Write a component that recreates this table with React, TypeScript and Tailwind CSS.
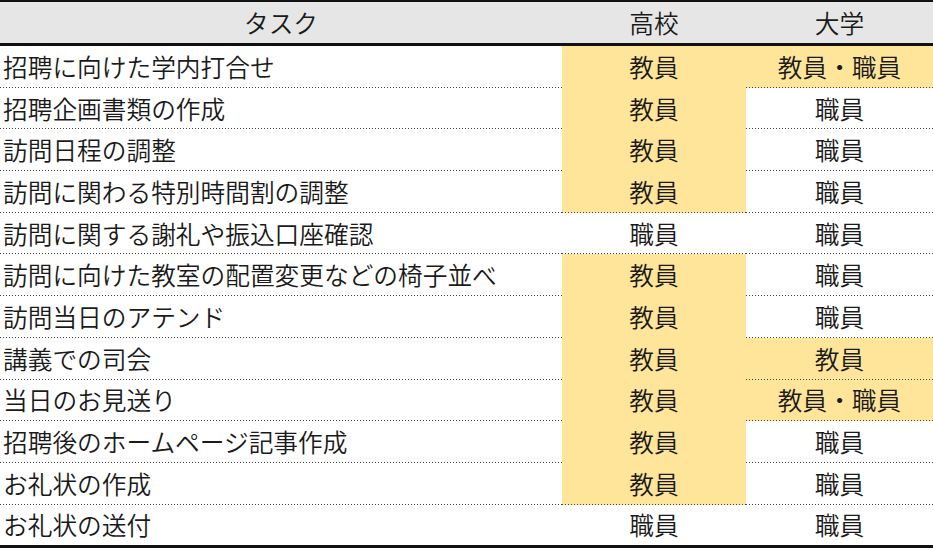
import React from 'react';

type Row = { task: string; hs: string; univ: string; hsY: boolean; univY: boolean };

const rows: Row[] = [
  { task: '招聘に向けた学内打合せ', hs: '教員', univ: '教員・職員', hsY: true, univY: true },
  { task: '招聘企画書類の作成', hs: '教員', univ: '職員', hsY: true, univY: false },
  { task: '訪問日程の調整', hs: '教員', univ: '職員', hsY: true, univY: false },
  { task: '訪問に関わる特別時間割の調整', hs: '教員', univ: '職員', hsY: true, univY: false },
  { task: '訪問に関する謝礼や振込口座確認', hs: '職員', univ: '職員', hsY: false, univY: false },
  { task: '訪問に向けた教室の配置変更などの椅子並べ', hs: '教員', univ: '職員', hsY: true, univY: false },
  { task: '訪問当日のアテンド', hs: '教員', univ: '職員', hsY: true, univY: false },
  { task: '講義での司会', hs: '教員', univ: '教員', hsY: true, univY: true },
  { task: '当日のお見送り', hs: '教員', univ: '教員・職員', hsY: true, univY: true },
  { task: '招聘後のホームページ記事作成', hs: '教員', univ: '職員', hsY: true, univY: false },
  { task: 'お礼状の作成', hs: '教員', univ: '職員', hsY: true, univY: false },
  { task: 'お礼状の送付', hs: '職員', univ: '職員', hsY: false, univY: false },
];

// 1px dotted rule with 3px period, like the sheet export
function Dots({ hidden }: { hidden?: boolean }) {
  if (hidden) return <div className="h-px" />;
  return <div className="h-px bg-[repeating-linear-gradient(90deg,#444_0_1px,transparent_1px_3px)]" />;
}

export default function App() {
  return (
    <div
      className="w-[933px] h-[556px] bg-white text-[#1a1a1a] text-[24.7px] leading-none font-[350]"
      style={{ fontFamily: '"Noto Sans CJK JP", "Noto Sans", sans-serif' }}
    >
      <div className="w-[933px]">
        {/* header */}
        <div className="grid grid-cols-[562px_184px_187px] h-[46px] border-t-[2px] border-b-[3px] border-[#111] bg-[#e6e6e6]">
          <div className="flex items-center justify-center">タスク</div>
          <div className="flex items-center justify-center">高校</div>
          <div className="flex items-center justify-center">大学</div>
        </div>

        {rows.map((r, i) => {
          const last = i === rows.length - 1;
          const next = rows[i + 1];
          const hideHsLine = r.hsY && !!next && next.hsY;
          return (
            <div
              key={r.task}
              className={`grid grid-cols-[562px_184px_187px] ${last ? 'h-[43.5px] border-b-[3px] border-[#111]' : 'h-[41.7px]'}`}
            >
              <div className="flex flex-col">
                <div className="flex-1 flex items-center pl-[3px]">{r.task}</div>
                {!last && <Dots />}
              </div>
              <div className={`flex flex-col ${r.hsY ? 'bg-[#ffe599]' : ''}`}>
                <div className="flex-1 flex items-center justify-center">{r.hs}</div>
                {!last && <Dots hidden={hideHsLine} />}
              </div>
              <div className={`flex flex-col ${r.univY ? 'bg-[#ffe599]' : ''}`}>
                <div className="flex-1 flex items-center justify-center">{r.univ}</div>
                {!last && <Dots />}
              </div>
            </div>
          );
        })}
      </div>
    </div>
  );
}
